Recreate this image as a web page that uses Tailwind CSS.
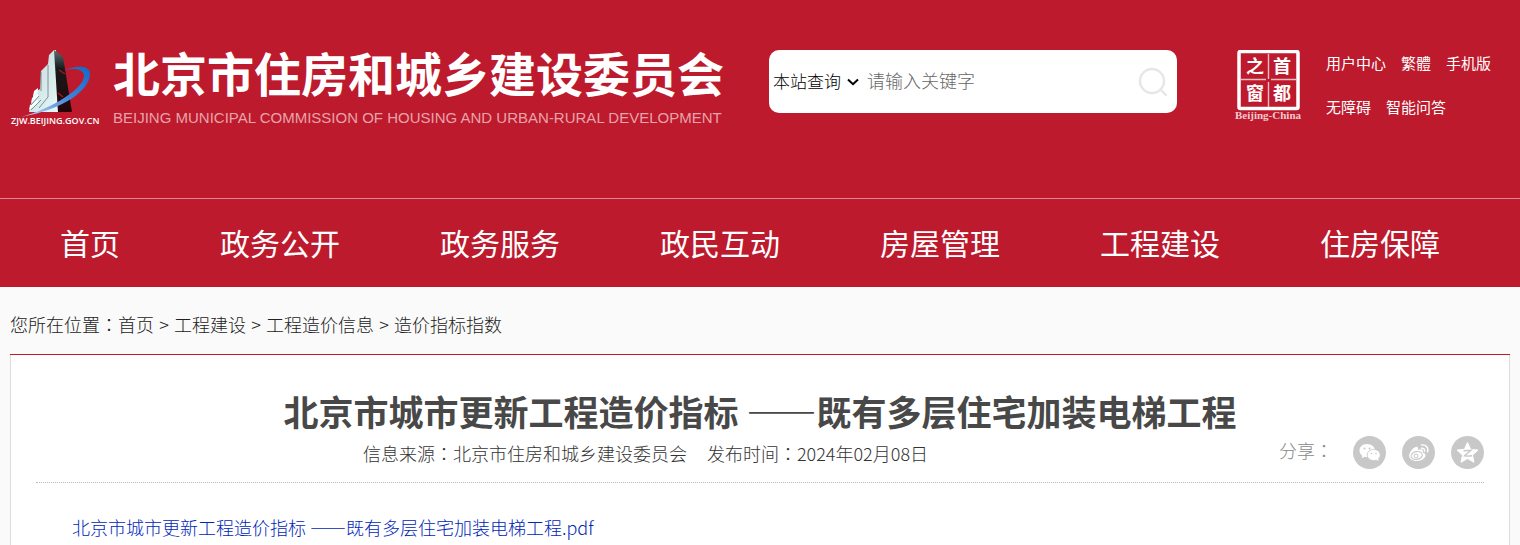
<!DOCTYPE html>
<html lang="zh-CN">
  <head>
    <meta charset="UTF-8" />
    <meta name="viewport" content="width=device-width, initial-scale=1" />
    <title>北京市住房和城乡建设委员会</title>
    <script src="https://cdn.jsdelivr.net/npm/@tailwindcss/browser@4"></script>
  </head>
  <body class="min-h-screen flex flex-col bg-[#fafafa] font-['Noto_Sans_CJK_SC',sans-serif] text-lg font-light text-[#333]">
    <header class="bg-[#bd1a2d] text-white">
      <div class="max-w-[1500px] mx-auto h-[198px] pt-[50px] flex items-start">
        <a href="#" class="flex gap-3">
          <svg class="w-[91px] h-[76px] shrink-0" viewBox="0 0 91 76" aria-hidden="true">
            <defs>
              <linearGradient id="front" x1="0" y1="0" x2="1" y2="1">
                <stop offset="0" stop-color="#c3d4d6" />
                <stop offset="1" stop-color="#e6fafa" />
              </linearGradient>
              <linearGradient id="side" x1="0" y1="0" x2="0" y2="1">
                <stop offset="0" stop-color="#587275" />
                <stop offset=".3" stop-color="#161a1b" />
                <stop offset="1" stop-color="#250508" />
              </linearGradient>
              <linearGradient id="swoosh" x1="1" y1="0" x2="0" y2="1">
                <stop offset="0" stop-color="#1268c8" />
                <stop offset=".45" stop-color="#3e83d8" />
                <stop offset="1" stop-color="#c9d9f0" />
              </linearGradient>
            </defs>
            <path d="M44 0 39 5 38 14 31 21 30 39 24 43 19 62 48 62 46 0Z" fill="url(#front)" />
            <path d="M44 0 53 7 62 62H48Z" fill="url(#side)" />
            <path d="M24 41l4-3v4l-5 5zM22 48l6-5v4l-7 6zM20 55l8-6v4l-9 7z" fill="#f4ffff" />
            <path d="M29 46 21 55M31 50 21 60M31 22v19M38 15v32l-9 11" stroke="#64787b" stroke-width=".8" fill="none" />
            <path d="M49 20l6 4M48 43l5 4" stroke="#a91525" stroke-width="1.5" />
            <path d="M54 20C68 15 80 15 80 24C80 39 56 59 11 67C43 58 75 38 74 25C73 19 64 18 54 20Z" fill="url(#swoosh)" />
            <text x="1" y="74" font-family="Open Sans, sans-serif" font-size="9" font-weight="600" fill="#fff">ZJW.BEIJING.GOV.CN</text>
          </svg>
          <span class="flex flex-col">
            <span class="text-[47px] leading-[44px] font-bold whitespace-nowrap">北京市住房和城乡建设委员会</span>
            <span class="mt-[14px] text-[15px] leading-5 font-normal text-[#e9a3aa] font-['Liberation_Sans',sans-serif] whitespace-nowrap">BEIJING MUNICIPAL COMMISSION OF HOUSING AND URBAN-RURAL DEVELOPMENT</span>
          </span>
        </a>

        <div class="ml-auto flex">
          <form class="w-[408px] h-[63px] bg-white rounded-[10px] flex items-center pl-1" onsubmit="return false">
            <div class="relative w-[86px] pb-1 shrink-0">
              <select aria-label="查询范围" class="w-full appearance-none bg-transparent text-[17px] leading-6 text-black outline-none">
                <option>本站查询</option>
                <option>一网通查</option>
              </select>
              <svg class="absolute right-0 top-3 w-3 h-2 pointer-events-none" viewBox="0 0 12 8" fill="none" stroke="#000" stroke-width="2" aria-hidden="true">
                <path d="M1 1.5 6 6.2 11 1.5" />
              </svg>
            </div>
            <input type="text" aria-label="关键字" placeholder="请输入关键字" class="min-w-0 flex-1 ml-2 pb-1 text-lg text-black placeholder:text-[#666] outline-none" />
            <button type="submit" aria-label="搜索" class="mr-2 cursor-pointer">
              <svg class="w-8 h-8" viewBox="0 0 32 32" fill="none" stroke="#e6e6e6" stroke-width="2.4" stroke-linecap="round">
                <circle cx="15" cy="15" r="12" />
                <path d="M23.5 23.5 29 29" />
              </svg>
            </button>
          </form>

          <a href="#" class="ml-[57px]" aria-label="首都之窗">
            <svg class="w-[68px] h-[72px]" viewBox="0 0 68 72" fill="none">
              <rect x="5" y="1.5" width="59" height="57" rx="1.5" stroke="#fff" stroke-width="3.5" />
              <path d="M34.5 4v25M34.5 32v25M7 29.5h25M37 29.5h25" stroke="#f0bfc4" stroke-width="1.4" />
              <g font-family="Noto Sans CJK SC, sans-serif" font-size="18" font-weight="700" fill="#fff">
                <text x="12" y="23">之</text>
                <text x="39" y="23">首</text>
                <text x="12" y="50">窗</text>
                <text x="39" y="50">都</text>
              </g>
              <text x="34" y="69" text-anchor="middle" font-family="Liberation Serif, serif" font-size="11" font-weight="700" fill="#f3cbd0">Beijing-China</text>
            </svg>
          </a>

          <div class="w-[184px] ml-6 flex flex-wrap gap-x-[15px] text-[15px] leading-[26px] gap-y-4 font-normal">
            <a href="#">用户中心</a>
            <a href="#">繁體</a>
            <a href="#">手机版</a>
            <a href="#">无障碍</a>
            <a href="#">智能问答</a>
          </div>
        </div>
      </div>

      <nav class="border-t border-[#dc8790]">
        <div class="max-w-[1500px] mx-auto pb-0.5 flex text-3xl leading-[86px] font-normal whitespace-nowrap">
          <a href="#" class="px-[50px]">首页</a>
          <a href="#" class="px-[50px]">政务公开</a>
          <a href="#" class="px-[50px]">政务服务</a>
          <a href="#" class="px-[50px]">政民互动</a>
          <a href="#" class="px-[50px]">房屋管理</a>
          <a href="#" class="px-[50px]">工程建设</a>
          <a href="#" class="px-[50px]">住房保障</a>
        </div>
      </nav>
    </header>

    <main class="w-full max-w-[1500px] mx-auto flex-1 flex flex-col">
      <div class="pt-[23px] pb-4 flex leading-7 text-[#222]">
        <span>您所在位置<span lang="zh-TW" class="font-['Noto_Sans_CJK_TC',sans-serif]">：</span></span>
        <a href="#">首页</a>
        <span class="w-5 text-center">&gt;</span>
        <a href="#">工程建设</a>
        <span class="w-5 text-center">&gt;</span>
        <a href="#">工程造价信息</a>
        <span class="w-5 text-center">&gt;</span>
        <a href="#">造价指标指数</a>
      </div>

      <article class="flex-1 bg-white border-x border-[#ddd] px-[25px] relative">
        <div class="absolute inset-x-[-1px] top-0 h-px bg-[#bd1a2d]"></div>
        <h1 class="pt-8 text-center text-[35px] leading-[50px] font-bold text-[#484848]">北京市城市更新工程造价指标 ——既有多层住宅加装电梯工程</h1>

        <div class="h-[47px] flex border-b border-dotted border-[#bbb]">
          <div class="flex-1 flex justify-center gap-5 pr-6 pt-[3px] leading-7">
            <span>信息来源<span lang="zh-TW" class="font-['Noto_Sans_CJK_TC',sans-serif]">：</span>北京市住房和城乡建设委员会</span>
            <span>发布时间<span lang="zh-TW" class="font-['Noto_Sans_CJK_TC',sans-serif]">：</span>2024年02月08日</span>
          </div>
          <div class="flex items-start gap-4 text-[#888]">
            <span class="w-[58px] leading-7">分享<span lang="zh-TW" class="font-['Noto_Sans_CJK_TC',sans-serif]">：</span></span>
            <button type="button" aria-label="微信" class="cursor-pointer">
              <svg class="w-[33px] h-[33px]" viewBox="0 0 33 33">
                <circle cx="16.5" cy="16.5" r="16.5" fill="#c8c8c8" />
                <path d="M14 8C9.5 8 6.5 10.9 6.5 14.5C6.5 16.7 7.6 18.5 9.3 19.7L8.6 22.3L11.7 20.7Q13 21 14.5 21C19 21 22 18 22 14.5C22 10.9 18.5 8 14 8Z" fill="#fff" />
                <ellipse cx="20.7" cy="19" rx="6.6" ry="5.6" fill="#fff" stroke="#c8c8c8" stroke-width=".8" />
                <path d="M23 23.5 25.5 25 25 21.5Z" fill="#fff" />
                <g fill="#c8c8c8">
                  <circle cx="11.5" cy="12.5" r="1" />
                  <circle cx="16.5" cy="12.5" r="1" />
                  <circle cx="18.5" cy="17.5" r=".8" />
                  <circle cx="23" cy="17.5" r=".8" />
                </g>
              </svg>
            </button>
            <button type="button" aria-label="微博" class="cursor-pointer">
              <svg class="w-[33px] h-[33px]" viewBox="0 0 33 33" fill="none">
                <circle cx="16.5" cy="16.5" r="16.5" fill="#c8c8c8" />
                <path d="M15.5 11C16.5 12 15.8 13.5 15.8 14C17.5 13.3 20 12.8 20.7 14C21.2 15 20.6 16 20.6 16.4C22.7 17 23.7 18 23.5 19.6C23 23 18.5 25.3 14.3 25.1C10 24.9 7 22.7 7.1 19.5C7.3 15.5 13 9.3 15.5 11Z" fill="#fff" />
                <ellipse cx="14.7" cy="19.5" rx="5.7" ry="3.9" transform="rotate(-10 14.7 19.5)" stroke="#c8c8c8" stroke-width="1.1" />
                <circle cx="14" cy="20" r="2" stroke="#c8c8c8" />
                <path d="M19.5 12.2C21.5 11.8 23 13.3 22.5 15.3M19.5 9C24 8.2 27 12 25.5 16" stroke="#fff" stroke-width="1.4" stroke-linecap="round" />
              </svg>
            </button>
            <button type="button" aria-label="QQ空间" class="cursor-pointer">
              <svg class="w-[33px] h-[33px]" viewBox="0 0 33 33">
                <circle cx="16.5" cy="16.5" r="16.5" fill="#c8c8c8" />
                <path d="M16.5 6.5 19.6 13.3 27 14.1 21.5 19 23 26.3 16.5 22.6 10 26.3 11.5 19 6 14.1 13.4 13.3Z" fill="#fff" stroke="#fff" stroke-linejoin="round" />
                <path d="M12.5 14.7 20 14.3 13.5 19.8Q17 20.5 21 19.7" fill="none" stroke="#c8c8c8" stroke-width="1.4" />
              </svg>
            </button>
          </div>
        </div>

        <p class="mt-[30px] px-9 leading-7">
          <a href="#" class="text-[#0026b8]">北京市城市更新工程造价指标 ——既有多层住宅加装电梯工程.pdf</a>
        </p>
      </article>
    </main>
  </body>
</html>
